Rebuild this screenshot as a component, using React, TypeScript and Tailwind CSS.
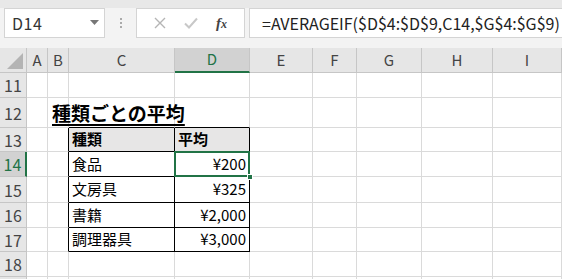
// Excel-Ausschnitt: Formelleiste + Tabelle "種類ごとの平均"

const COLS = [
  { key: "A", w: 21 },
  { key: "B", w: 21 },
  { key: "C", w: 106 },
  { key: "D", w: 75 },
  { key: "E", w: 63 },
  { key: "F", w: 44 },
  { key: "G", w: 65 },
  { key: "H", w: 71 },
  { key: "I", w: 69 },
];

const ROWS = [11, 12, 13, 14, 15, 16, 17, 18, 19];

const DATA: Record<string, string> = {
  C13: "種類",
  D13: "平均",
  C14: "食品",
  D14: "¥200",
  C15: "文房具",
  D15: "¥325",
  C16: "書籍",
  D16: "¥2,000",
  C17: "調理器具",
  D17: "¥3,000",
};

const FONT = "font-['Noto_Sans_CJK_JP','Noto_Sans',sans-serif]";

function Cell({ col, row }: { col: string; row: number }) {
  const inTable = row >= 13 && row <= 17;
  const rightBlack = inTable && (col === "B" || col === "C" || col === "D");
  const bottomBlack = row >= 12 && row <= 17 && (col === "C" || col === "D");
  const header = row === 13 && (col === "C" || col === "D");
  const numeric = col === "D" && row >= 14;
  const text = DATA[col + row];
  const selected = col === "D" && row === 14;

  return (
    <div
      className={`relative border-r border-b flex items-center px-[3px] text-[15px] text-black whitespace-nowrap ${
        rightBlack ? "border-r-black" : "border-r-[#dadada]"
      } ${bottomBlack ? "border-b-black" : "border-b-[#dadada]"} ${
        header ? "bg-[#e7e6e6] font-bold" : "bg-white"
      } ${numeric ? "justify-end" : "justify-start"}`}
    >
      {col === "B" && row === 12 && (
        <span className="absolute left-[4px] top-[1px] z-10 text-[19px] font-bold underline underline-offset-[3px] decoration-[1.5px]">
          種類ごとの平均
        </span>
      )}
      {text}
      {selected && (
        <>
          <div className="absolute -left-px -top-px -right-px -bottom-px border-2 border-[#217346] z-10" />
          <div className="absolute -right-[4px] -bottom-[4px] w-[6px] h-[6px] bg-[#217346] border border-white z-20" />
        </>
      )}
    </div>
  );
}

export default function App() {
  return (
    <div className={`w-[562px] h-[279px] overflow-hidden bg-[#f3f3f3] ${FONT}`}>
      {/* Formelleiste */}
      <div className="h-[8px] bg-[#e8e8e8]" />
      <div className="h-[30px] flex items-stretch">
        <div className="ml-[4px] w-[101px] bg-white border border-[#d4d4d4] flex items-center pl-[7px] pr-[5px] text-[16px] text-[#333]">
          <span className="flex-1 tracking-[0.5px]">D14</span>
          <svg width="9" height="6" viewBox="0 0 9 6">
            <path d="M0 0h9L4.5 5z" fill="#777" />
          </svg>
        </div>
        <div className="w-[31px] flex flex-col items-center justify-center gap-[2px]">
          <div className="w-[2px] h-[2px] bg-[#aaa]" />
          <div className="w-[2px] h-[2px] bg-[#aaa]" />
          <div className="w-[2px] h-[2px] bg-[#aaa]" />
        </div>
        <div className="w-[109px] bg-white border border-[#d4d4d4] flex items-center justify-around px-[8px]">
          <svg width="12" height="12" viewBox="0 0 12 12">
            <path d="M1 1l10 10M11 1L1 11" stroke="#b5b5b5" strokeWidth="1.4" />
          </svg>
          <svg width="14" height="12" viewBox="0 0 14 12">
            <path d="M1 6.5l4 4L13 1.5" stroke="#c8c8c8" strokeWidth="2" fill="none" />
          </svg>
          <span className="font-['Liberation_Serif',serif] italic font-bold text-[15px] text-[#444]">
            f<span className="text-[12px]">x</span>
          </span>
        </div>
        <div className="ml-[4px] flex-1 bg-white border border-[#d4d4d4] border-r-0 flex items-center pl-[12px] text-[16px] text-[#222] whitespace-nowrap overflow-hidden">
          =AVERAGEIF($D$4:$D$9,C14,$G$4:$G$9)
        </div>
      </div>
      <div className="h-[10px]" />

      {/* Tabellenblatt */}
      <div className="grid grid-cols-[27px_21px_21px_106px_75px_63px_44px_65px_71px_69px] grid-rows-[25px_25px_30px_24px_25px_26px_25px_24px_25px_25px]">
        {/* Kopfzeile */}
        <div className="relative bg-[#e6e6e6] border-r border-b border-[#c6c6c6]">
          <svg className="absolute right-[3px] bottom-[3px]" width="16" height="16" viewBox="0 0 16 16">
            <path d="M16 0V16H0z" fill="#b4b4b4" />
          </svg>
        </div>
        {COLS.map((c) =>
          c.key === "D" ? (
            <div
              key={c.key}
              className="bg-[#d2d2d2] border-r border-r-[#c6c6c6] border-b-2 border-b-[#217346] flex items-center justify-center text-[15px] text-[#217346]"
            >
              {c.key}
            </div>
          ) : (
            <div
              key={c.key}
              className="bg-[#e6e6e6] border-r border-b border-[#c6c6c6] flex items-center justify-center text-[15px] text-[#444]"
            >
              {c.key}
            </div>
          )
        )}

        {ROWS.map((r) => (
          <div key={r} className="contents">
            {r === 14 ? (
              <div className="bg-[#d2d2d2] border-r-2 border-r-[#217346] border-b border-b-[#c6c6c6] flex items-center justify-center text-[16px] text-[#217346]">
                {r}
              </div>
            ) : (
              <div className="bg-[#e6e6e6] border-r border-b border-[#c6c6c6] flex items-center justify-center text-[16px] text-[#444]">
                {r < 19 ? r : ""}
              </div>
            )}
            {COLS.map((c) => (
              <Cell key={c.key} col={c.key} row={r} />
            ))}
          </div>
        ))}
      </div>
    </div>
  );
}
